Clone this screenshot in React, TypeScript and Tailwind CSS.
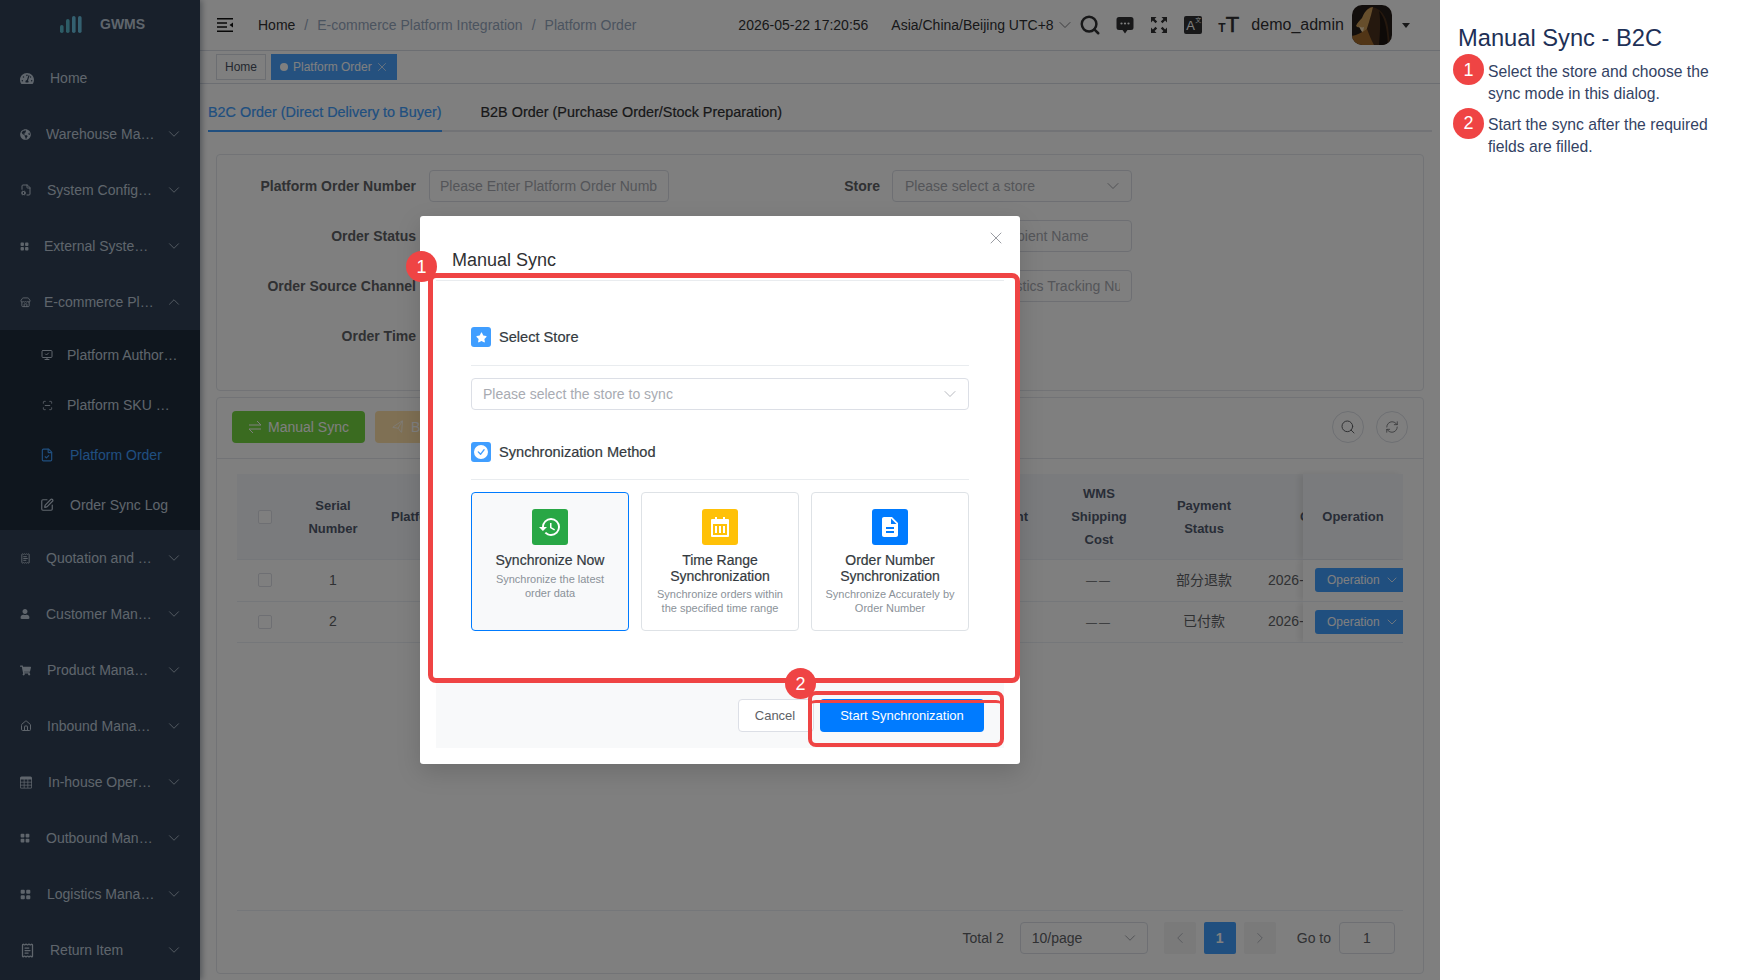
import type { ReactNode } from "react";
import { ChevronDown, ChevronLeft, ChevronRight, ChevronUp, House, MonitorCheck, RefreshCw, Search, Send, SquarePen, X, FileCheck, ReceiptText, Store, ScanLine, FileCog } from "lucide-react";
import { BsCheckCircleFill, BsGridFill, BsTable } from "react-icons/bs";
import { FaGlobeAmericas, FaShoppingCart, FaStar, FaTachometerAlt, FaUser } from "react-icons/fa";
import { MdDescription, MdHistory } from "react-icons/md";

type MenuItem = {
  label: string;
  icon: ReactNode;
  gap: string;
  arrow?: boolean;
};

const topMenu: MenuItem[] = [
  { label: "Home", icon: <FaTachometerAlt className="h-[13px] w-[14px]" />, gap: "ml-[16px]" },
  { label: "Warehouse Management", icon: <FaGlobeAmericas className="h-[11px] w-[11px]" />, gap: "ml-[15px]", arrow: true },
  { label: "System Configuration", icon: <FileCog className="h-[12px] w-[12px]" />, gap: "ml-[15px]", arrow: true },
  { label: "External System Integration", icon: <BsGridFill className="h-[9px] w-[9px]" />, gap: "ml-[15px]", arrow: true },
];

const bottomMenu: MenuItem[] = [
  { label: "Quotation and Billing", icon: <ReceiptText className="h-[11px] w-[11px]" />, gap: "ml-[15px]", arrow: true },
  { label: "Customer Management", icon: <FaUser className="h-[10px] w-[10px]" />, gap: "ml-[16px]", arrow: true },
  { label: "Product Management", icon: <FaShoppingCart className="h-[11px] w-[11px]" />, gap: "ml-[16px] mr-[4px]", arrow: true },
  { label: "Inbound Management", icon: <House className="h-[12px] w-[12px]" />, gap: "ml-[15px]", arrow: true },
  { label: "In-house Operations", icon: <BsTable className="h-[13px] w-[12px]" />, gap: "ml-[16px]", arrow: true },
  { label: "Outbound Management", icon: <BsGridFill className="h-[10px] w-[10px]" />, gap: "ml-[16px]", arrow: true },
  { label: "Logistics Management", icon: <BsGridFill className="h-[11px] w-[11px]" />, gap: "ml-[16px]", arrow: true },
  { label: "Return Item", icon: <ReceiptText className="h-[15px] w-[15px]" />, gap: "ml-[15px]", arrow: true },
];

const subMenu = [
  { label: "Platform Authorization", icon: <MonitorCheck className="h-[12px] w-[12px]" />, left: "ml-[13px]", active: false },
  { label: "Platform SKU Mapping", icon: <ScanLine className="h-[11px] w-[11px]" />, left: "ml-[13px]", active: false },
  { label: "Platform Order", icon: <FileCheck className="h-[16px] w-[16px]" />, left: "ml-[16px]", active: true },
  { label: "Order Sync Log", icon: <SquarePen className="h-[14px] w-[14px]" />, left: "ml-[16px]", active: false },
];

const SideRow = ({ item }: { item: MenuItem }) => (
  <div className="flex h-[56px] items-center pl-5 pr-[17px] text-[14px] text-[#bfcbd9]">
    <span className="shrink-0">{item.icon}</span>
    <span className={`${item.gap} min-w-0 flex-1 truncate`}>{item.label}</span>
    {item.arrow ? <ChevronDown className="ml-[9px] h-[18px] w-[18px] shrink-0" strokeWidth={1.1} /> : <span className="w-[26px]" />}
  </div>
);

const Sidebar = () => (
  <aside className="relative z-10 flex h-full w-[200px] shrink-0 flex-col bg-[#304156] shadow-[2px_0_6px_rgba(0,21,41,0.35)]">
    <div className="flex h-[50px] items-center pl-[60px]">
      <svg width="22" height="17" viewBox="0 0 22 17" className="mt-[-1px]">
        <rect x="0" y="9" width="3.6" height="8" rx="1.8" fill="#5ab8cc" />
        <rect x="6" y="3" width="3.6" height="14" rx="1.8" fill="#5ab8cc" />
        <rect x="12" y="0" width="3.6" height="17" rx="1.8" fill="#68c0e0" />
        <rect x="18" y="0" width="3.6" height="17" rx="1.8" fill="#68c0e0" />
      </svg>
      <span className="ml-[18px] mt-[-2px] text-[14px] font-bold text-[#bfcbd9]">GWMS</span>
    </div>
    {topMenu.map((item) => (
      <SideRow key={item.label} item={item} />
    ))}
    <div className="flex h-[56px] items-center pl-5 pr-[17px] text-[14px] text-[#bfcbd9]">
      <Store className="h-[11px] w-[11px] shrink-0" />
      <span className="ml-[13px] min-w-0 flex-1 truncate">E-commerce Platform Integration</span>
      <ChevronUp className="ml-[9px] h-[18px] w-[18px] shrink-0" strokeWidth={1.1} />
    </div>
    <div className="bg-[#1f2d3d]">
      {subMenu.map((item) => (
        <div key={item.label} className={`flex h-[50px] items-center pl-[40px] pr-[20px] text-[14px] ${item.active ? "text-[#409eff]" : "text-[#bfcbd9]"}`}>
          <span className="flex w-[14px] shrink-0 justify-center">{item.icon}</span>
          <span className={`${item.left} min-w-0 flex-1 truncate`}>{item.label}</span>
        </div>
      ))}
    </div>
    {bottomMenu.map((item) => (
      <SideRow key={item.label} item={item} />
    ))}
  </aside>
);

const TopBar = () => (
  <header className="flex h-[51px] shrink-0 items-center border-b border-[#d8dce5] bg-white pl-[17px] text-[14px]">
    <svg width="16" height="14" viewBox="0 0 16 14" className="mt-[-1px] shrink-0">
      <path d="M0 .7h16M0 5h10M0 9h10M0 13.3h16" stroke="#111" strokeWidth="1.4" />
      <path d="M16 4.5v5L12.5 7z" fill="#111" />
    </svg>
    <nav className="ml-[25px] flex items-center whitespace-nowrap">
      <span className="text-[#303133]">Home</span>
      <span className="mx-[9px] text-[#97a8be]">/</span>
      <span className="text-[#97a8be]">E-commerce Platform Integration</span>
      <span className="mx-[9px] text-[#97a8be]">/</span>
      <span className="text-[#97a8be]">Platform Order</span>
    </nav>
    <span className="ml-[102px] w-[132px] shrink-0 whitespace-nowrap text-[#303133]">2026-05-22 17:20:56</span>
    <span className="ml-[21px] w-[162px] shrink-0 whitespace-nowrap text-[#303133]">Asia/China/Beijing UTC+8</span>
    <ChevronDown className="ml-[2px] h-[20px] w-[20px] shrink-0 text-[#606266]" strokeWidth={1} />
    <Search className="ml-[4px] h-[22px] w-[22px] shrink-0 text-[#303133]" strokeWidth={2.7} />
    <svg width="18" height="18" viewBox="0 0 18 18" className="ml-[15px] shrink-0">
      <path d="M3 1h12a2.5 2.5 0 0 1 2.5 2.5v8A2.5 2.5 0 0 1 15 14h-3.5L9 17.5 6.5 14H3a2.5 2.5 0 0 1-2.5-2.5v-8A2.5 2.5 0 0 1 3 1z" fill="#303133" />
      <circle cx="5.5" cy="7.5" r="1.1" fill="#fff" />
      <circle cx="9" cy="7.5" r="1.1" fill="#fff" />
      <circle cx="12.5" cy="7.5" r="1.1" fill="#fff" />
    </svg>
    <svg width="18" height="18" viewBox="0 0 18 18" className="ml-[16px] shrink-0">
      <path d="M1 6.5V1h5.5L4.6 2.9l2.6 2.6-1.7 1.7-2.6-2.6zM17 6.5V1h-5.5l1.9 1.9-2.6 2.6 1.7 1.7 2.6-2.6zM1 11.5V17h5.5l-1.9-1.9 2.6-2.6-1.7-1.7-2.6 2.6zM17 11.5V17h-5.5l1.9-1.9-2.6-2.6 1.7-1.7 2.6 2.6z" fill="#303133" />
    </svg>
    <span className="relative ml-[16px] h-[18px] w-[18px] shrink-0 rounded-[2px] bg-[#303133] text-white">
      <span className="absolute left-[2px] top-[3px] text-[13px] leading-[14px]">A</span>
      <span className="absolute right-[1px] top-[1px] text-[6px] leading-[7px]">文</span>
    </span>
    <span className="ml-[16px] flex w-[18px] shrink-0 items-end leading-none text-[#303133]">
      <span className="text-[12px] font-bold leading-[13px]">T</span>
      <span className="text-[22px] leading-[20px] [-webkit-text-stroke:0.6px]">T</span>
    </span>
    <span className="ml-[15px] w-[92px] shrink-0 whitespace-nowrap text-[16px] text-[#303133]">demo_admin</span>
    <svg width="40" height="40" viewBox="0 0 40 40" className="ml-[9px] shrink-0 rounded-[10px]">
      <rect width="40" height="40" fill="#241c18" />
      <path d="M18 2c10 0 16 8 18 20l2 18H14c-2-8-4-12-2-24 1-7 2-12 6-14z" fill="#4a301c" />
      <path d="M21 2c-6 1-9 6-11 11-2 2-5 5-6 8 2 2 3 1 5 2 0 4 2 6 4 8 2-9 6-19 8-29z" fill="#cc9c58" />
      <path d="M7 21c1 1 3 2 5 1l-1 5c-2-1-3-3-4-6z" fill="#eed8b4" />
      <path d="M0 40V31c5-1 11-4 15-7 2 5 4 11 7 16z" fill="#a26a2c" />
      <path d="M27 6c5 6 8 14 9 34h-9c1-12 2-24 0-34z" fill="#1c1410" />
    </svg>
    <span className="ml-[10px] h-0 w-0 shrink-0 border-x-[4px] border-t-[5px] border-x-transparent border-t-[#303133]" />
  </header>
);

const TagBar = () => (
  <div className="flex h-[33px] shrink-0 items-center gap-[5px] border-b border-[#d8dce5] bg-white pl-[16px] text-[12px]">
    <span className="flex h-[26px] w-[50px] items-center justify-center border border-[#d8dce5] text-[#495060]">Home</span>
    <span className="flex h-[26px] w-[126px] items-center bg-[#4aa3ff] pl-[9px] text-white">
      <span className="h-[8px] w-[8px] rounded-full bg-white" />
      <span className="ml-[5px]">Platform Order</span>
      <X className="ml-[3px] h-[14px] w-[14px]" strokeWidth={1.2} />
    </span>
  </div>
);

const tabText = "flex items-center whitespace-nowrap text-[14.4px] [-webkit-text-stroke:0.2px]";

const Tabs = () => (
  <div className="ml-[8px] mr-[8px] flex h-[48px] shrink-0 items-stretch gap-[39px] border-b-2 border-[#e4e7ed] pt-[12px]">
    <div className={`${tabText} relative top-[2px] border-b-2 border-[#409eff] text-[#409eff]`}>
      <span className="mt-[-2px]">B2C Order (Direct Delivery to Buyer)</span>
    </div>
    <div className={`${tabText} text-[#303133]`}>B2B Order (Purchase Order/Stock Preparation)</div>
  </div>
);

const FilterInput = ({ placeholder, select, pad }: { placeholder: string; select?: boolean; pad: string }) => (
  <div className={`flex h-[32px] w-[240px] shrink-0 items-center overflow-hidden rounded-[4px] border border-[#dcdfe6] bg-white pr-[11px] text-[14px] text-[#a8abb2] ${pad}`}>
    <span className="min-w-0 flex-1 overflow-hidden whitespace-nowrap">{placeholder}</span>
    {select ? <ChevronDown className="mr-[-3px] h-[20px] w-[20px] shrink-0 text-[#909399]" strokeWidth={1} /> : null}
  </div>
);

const FilterRow = ({ label, placeholder, rightLabel, right, select }: { label: string; placeholder?: string; rightLabel?: string; right?: string; select?: boolean }) => (
  <div className="flex h-[32px] items-center text-[14px] font-bold text-[#606266]">
    <span className="w-[199px] shrink-0 whitespace-nowrap text-right">{label}</span>
    <span className="w-[13px] shrink-0" />
    <div className="font-normal">{placeholder ? <FilterInput placeholder={placeholder} pad="pl-[10px]" /> : <span className="block w-[240px]" />}</div>
    <span className="w-[211px] shrink-0 text-right">{rightLabel}</span>
    <span className="w-[12px] shrink-0" />
    <div className="font-normal">{right ? <FilterInput placeholder={right} select={select} pad="pl-[12px]" /> : null}</div>
  </div>
);

const FilterCard = () => (
  <section className="mt-[22px] flex h-[237px] shrink-0 flex-col gap-[18px] rounded-[4px] border border-[#e4e7ed] bg-white pt-[15px]">
    <FilterRow label="Platform Order Number" placeholder="Please Enter Platform Order Number" rightLabel="Store" right="Please select a store" select />
    <FilterRow label="Order Status" placeholder="Please select" rightLabel="Recipient Name" right="Please Enter Recipient Name" />
    <FilterRow label="Order Source Channel" placeholder="Please select" rightLabel="Logistics Tracking Number" right="Please Enter Logistics Tracking Number" />
    <FilterRow label="Order Time" />
  </section>
);

const headCell = "flex shrink-0 items-center justify-center text-center text-[13px] font-bold leading-[23px] text-[#515a6e]";

const TableRow = ({ serial, payment }: { serial: string; payment: string }) => (
  <div className="flex h-[41.5px] overflow-hidden border-b border-[#ebeef5] text-[14px] text-[#606266]">
    <div className="flex w-[56px] shrink-0 items-center justify-center">
      <span className="h-[14px] w-[14px] rounded-[2px] border border-[#dcdfe6] bg-white" />
    </div>
    <div className="flex w-[80px] shrink-0 items-center justify-center">{serial}</div>
    <div className="w-[676px] shrink-0" />
    <div className="flex w-[100px] shrink-0 items-center justify-center text-[11px] tracking-[2px]">——</div>
    <div className="flex w-[110px] shrink-0 items-center justify-center">{payment}</div>
    <div className="flex w-[44px] shrink-0 items-center overflow-hidden whitespace-nowrap pl-[9px]">2026-05-22</div>
    <div className="flex w-[100px] shrink-0 items-center bg-white pl-[12px] shadow-[-4px_0_6px_rgba(0,0,0,0.08)]">
      <button className="flex h-[24px] w-[100px] shrink-0 items-center rounded-l-[3px] bg-[#409eff] pl-[12px] text-[12px] text-white">
        Operation
        <ChevronDown className="ml-[4px] h-[16px] w-[16px]" strokeWidth={1.2} />
      </button>
    </div>
  </div>
);

const TableCard = () => (
  <section className="mt-[6px] flex min-h-0 flex-1 flex-col rounded-[4px] border border-[#e4e7ed] bg-white">
    <div className="flex h-[61px] shrink-0 items-center justify-between border-b border-[#e4e7ed] px-[15px] pb-[2px]">
      <div className="flex gap-[10px]">
        <button className="flex h-[32px] w-[133px] items-center rounded-[4px] bg-[#74d640] pl-[17px] text-[14px] text-white">
          <svg width="12" height="12" viewBox="0 0 12 12" className="mr-[7px]">
            <path d="M0 4h12L8 0M12 8H0l4 4" fill="none" stroke="#fff" strokeWidth="1" />
          </svg>
          Manual Sync
        </button>
        <button className="flex h-[32px] w-[100px] items-center rounded-[4px] bg-[#ffe0a8] pl-[17px] text-[14px] text-white">
          <Send className="mr-[6px] h-[13px] w-[13px] shrink-0 -rotate-[15deg]" strokeWidth={1.2} />
          Batch
        </button>
      </div>
      <div className="flex gap-[12px]">
        <span className="flex h-[32px] w-[32px] items-center justify-center rounded-full border border-[#dcdfe6] text-[#606266]">
          <Search className="h-[16px] w-[16px]" strokeWidth={1.5} />
        </span>
        <span className="flex h-[32px] w-[32px] items-center justify-center rounded-full border border-[#dcdfe6] text-[#606266]">
          <RefreshCw className="h-[14px] w-[14px]" strokeWidth={1.3} />
        </span>
      </div>
    </div>
    <div className="mx-5 mt-[15px] flex-1">
      <div className="flex h-[86px] border-b border-[#ebeef5] bg-[#f5f7fa]">
        <div className={`${headCell} w-[56px]`}>
          <span className="h-[14px] w-[14px] rounded-[2px] border border-[#dcdfe6] bg-white" />
        </div>
        <div className={`${headCell} w-[80px]`}>
          Serial
          <br />
          Number
        </div>
        <div className={`${headCell} w-[338px] justify-start whitespace-nowrap pl-[18px]`}>Platform Order Number</div>
        <div className={`${headCell} w-[338px] justify-end whitespace-nowrap pr-[21px]`}>Order Amount</div>
        <div className={`${headCell} w-[100px]`}>
          WMS
          <br />
          Shipping
          <br />
          Cost
        </div>
        <div className={`${headCell} w-[110px]`}>
          Payment
          <br />
          Status
        </div>
        <div className={`${headCell} w-[44px] justify-start overflow-hidden whitespace-nowrap pl-[41px]`}>Created Time</div>
        <div className={`${headCell} w-[100px] shadow-[-4px_0_6px_rgba(0,0,0,0.08)]`}>Operation</div>
      </div>
      <TableRow serial="1" payment="部分退款" />
      <TableRow serial="2" payment="已付款" />
    </div>
    <div className="mx-5 flex h-[63px] shrink-0 items-start justify-end border-t border-[#ebeef5] pr-[8px] pt-[11px] text-[14px] text-[#606266]">
      <span className="mr-[16px] flex h-[32px] items-center">Total 2</span>
      <span className="flex h-[32px] w-[128px] items-center justify-between rounded-[4px] border border-[#dcdfe6] pl-[11px] pr-[8px]">
        10/page
        <ChevronDown className="h-[18px] w-[18px] text-[#909399]" strokeWidth={1.1} />
      </span>
      <span className="ml-[16px] flex h-[32px] w-[32px] items-center justify-center rounded-[2px] bg-[#f4f4f5] text-[#a8abb2]">
        <ChevronLeft className="h-[18px] w-[18px]" strokeWidth={1.1} />
      </span>
      <span className="ml-[8px] flex h-[32px] w-[32px] items-center justify-center rounded-[2px] bg-[#409eff] font-bold text-white">1</span>
      <span className="ml-[8px] flex h-[32px] w-[32px] items-center justify-center rounded-[2px] bg-[#f4f4f5] text-[#a8abb2]">
        <ChevronRight className="h-[18px] w-[18px]" strokeWidth={1.1} />
      </span>
      <span className="ml-[21px] flex h-[32px] items-center">Go to</span>
      <span className="ml-[8px] flex h-[32px] w-[56px] items-center justify-center rounded-[4px] border border-[#dcdfe6]">1</span>
    </div>
  </section>
);

const SectionTitle = ({ icon, title, height }: { icon: ReactNode; title: string; height: string }) => (
  <div className={`flex items-start border-b border-[#e9ecef] text-[14.6px] text-[#343a40] [-webkit-text-stroke:0.2px] ${height}`}>
    <span className="flex h-[20px] w-[20px] items-center justify-center rounded-[3px] bg-[#409eff] text-white">{icon}</span>
    <span className="ml-[8px] leading-[20px]">{title}</span>
  </div>
);

const CalendarGlyph = () => (
  <svg width="20" height="22" viewBox="0 0 20 22">
    <path d="M2 3h3V1h2v2h6V1h2v2h3a1 1 0 0 1 1 1v16a1 1 0 0 1-1 1H2a1 1 0 0 1-1-1V4a1 1 0 0 1 1-1z" fill="#fff" />
    <rect x="3" y="8" width="14" height="11" fill="#ffc107" />
    <rect x="5" y="10" width="2" height="7" fill="#fff" />
    <rect x="9" y="10" width="2" height="7" fill="#fff" />
    <rect x="13" y="10" width="2" height="7" fill="#fff" />
  </svg>
);

const methods = [
  {
    title: ["Synchronize Now"],
    desc: ["Synchronize the latest", "order data"],
    tile: "bg-[#28a745]",
    icon: <MdHistory className="h-[24px] w-[24px]" />,
    active: true,
  },
  {
    title: ["Time Range", "Synchronization"],
    desc: ["Synchronize orders within", "the specified time range"],
    tile: "bg-[#ffc107]",
    icon: <CalendarGlyph />,
    active: false,
  },
  {
    title: ["Order Number", "Synchronization"],
    desc: ["Synchronize Accurately by", "Order Number"],
    tile: "bg-[#007bff]",
    icon: <MdDescription className="h-[24px] w-[24px]" />,
    active: false,
  },
];

const StepBadge = ({ n, className }: { n: string; className: string }) => (
  <span className={`flex h-[31px] w-[31px] items-center justify-center rounded-full bg-[#ef4444] text-[18px] leading-none text-white ${className}`}>{n}</span>
);

const Modal = () => (
  <div className="absolute left-[420px] top-[216px] z-30 flex h-[548px] w-[600px] flex-col rounded-[3px] bg-white shadow-[0_8px_24px_rgba(0,0,0,0.15)]">
    <div className="relative mx-[16px] flex h-[65px] shrink-0 items-end border-b border-[#e9ecef] pb-[8px] pl-[16px] text-[18px] leading-[24px] text-[#303133]">
      Manual Sync
      <X className="absolute right-[-2px] top-[12px] h-[20px] w-[20px] text-[#909399]" strokeWidth={1.1} />
    </div>
    <div className="flex-1 px-[51px] pt-[46px]">
      <SectionTitle icon={<FaStar className="h-[11px] w-[11px]" />} title="Select Store" height="h-[39px]" />
      <div className="mt-[12px] flex h-[32px] items-center justify-between rounded-[4px] border border-[#dcdfe6] pl-[11px] pr-[8px] text-[14px] text-[#a8abb2]">
        Please select the store to sync
        <ChevronDown className="h-[20px] w-[20px] text-[#a8abb2]" strokeWidth={1} />
      </div>
      <div className="mt-[32px]">
        <SectionTitle icon={<BsCheckCircleFill className="h-[14px] w-[14px]" />} title="Synchronization Method" height="h-[38px]" />
      </div>
      <div className="mt-[12px] grid grid-cols-3 gap-[12px]">
        {methods.map((m) => (
          <div
            key={m.title.join(" ")}
            className={`flex h-[139px] flex-col items-center rounded-[4px] border pt-[16px] text-center ${m.active ? "border-[#007bff] bg-[#f8f9fa]" : "border-[#dee2e6] bg-white"}`}
          >
            <span className={`flex h-[36px] w-[36px] items-center justify-center rounded-[3px] text-white ${m.tile}`}>{m.icon}</span>
            <div className="mt-[8px] text-[14px] leading-[15.5px] text-[#343a40] [-webkit-text-stroke:0.2px]">
              {m.title.map((t) => (
                <div key={t}>{t}</div>
              ))}
            </div>
            <div className="mt-[3px] text-[11px] leading-[14px] text-[#8b9299]">
              {m.desc.map((t) => (
                <div key={t}>{t}</div>
              ))}
            </div>
          </div>
        ))}
      </div>
    </div>
    <div className="mx-[16px] mb-[16px] flex h-[66px] shrink-0 items-start justify-end gap-[6px] bg-[#f8f9fa] pr-[20px] pt-[17px] text-[13px]">
      <button className="h-[33px] w-[76px] rounded-[4px] border border-[#dcdfe6] bg-white pr-[2px] text-[#606266]">Cancel</button>
      <button className="h-[33px] w-[164px] rounded-[4px] bg-[#007bff] text-white">Start Synchronization</button>
    </div>
    {/* annotation marks */}
    <div className="absolute left-[8px] top-[57px] h-[410px] w-[592px] rounded-[8px] border-[5px] border-[#ef4444]" />
    <div className="absolute left-[388px] top-[475px] h-[56px] w-[196px] rounded-[8px] border-[4px] border-[#ef4444]" />
    <div className="absolute left-[388px] top-[484px] h-[8px] w-[196px] rounded-t-[8px] border-t-[3px] border-[#ef4444]" />
    <StepBadge n="1" className="absolute left-[-14px] top-[35px]" />
    <StepBadge n="2" className="absolute left-[365px] top-[452px]" />
  </div>
);

export default function App() {
  return (
    <div className="flex h-[980px] w-[1760px] overflow-hidden bg-white font-['Liberation_Sans','Noto_Sans_CJK_SC',sans-serif]">
      <div className="relative flex h-full w-[1440px] shrink-0 overflow-hidden">
        <Sidebar />
        <main className="flex h-full min-w-0 flex-1 flex-col">
          <TopBar />
          <TagBar />
          <Tabs />
          <div className="flex min-h-0 flex-1 flex-col pb-[6px] pl-[16px] pr-[16px]">
            <FilterCard />
            <TableCard />
          </div>
        </main>
        <div className="absolute inset-0 z-20 bg-black/50" />
        <Modal />
      </div>
      <aside className="flex-1 pl-[18px] pr-[30px] pt-[24px]">
        <h2 className="whitespace-nowrap text-[23.7px] leading-[28px] text-[#1e3056]">Manual Sync - B2C</h2>
        <div className="mt-[2px] flex flex-col gap-[3px] text-[15.7px] leading-[22px] text-[#334263]">
          <div className="flex">
            <StepBadge n="1" className="ml-[-5px] shrink-0" />
            <p className="ml-[4px] pt-[6.5px]">Select the store and choose the sync mode in this dialog.</p>
          </div>
          <div className="flex">
            <StepBadge n="2" className="ml-[-5px] shrink-0" />
            <p className="ml-[4px] pt-[6.5px]">Start the sync after the required fields are filled.</p>
          </div>
        </div>
      </aside>
    </div>
  );
}
